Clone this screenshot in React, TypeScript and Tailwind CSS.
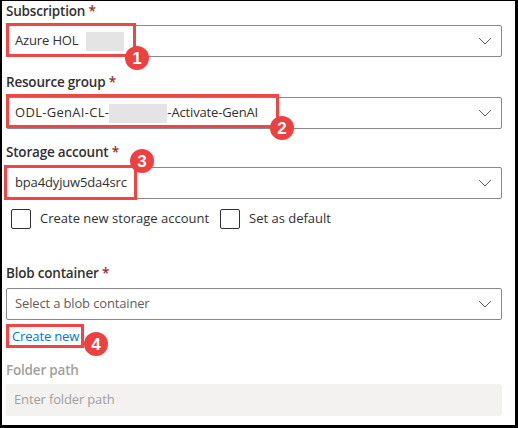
import React from "react";

const font = { fontFamily: '"Open Sans", sans-serif' };

function Chevron() {
  return (
    <svg width="14" height="8" viewBox="0 0 14 8" className="shrink-0">
      <polyline points="1,1 7,7 13,1" fill="none" stroke="#605e5c" strokeWidth="1" />
    </svg>
  );
}

function Label({ text, muted }: { text: string; muted?: boolean }) {
  return (
    <div className={`h-5 leading-5 text-[13.5px] tracking-[-0.2px] font-semibold ${muted ? "text-[#a19f9d]" : "text-[#323130]"}`}>
      {text}
      {!muted && <span className="text-[#a4262c]"> *</span>}
    </div>
  );
}

function Dropdown({ children, className = "" }: { children: React.ReactNode; className?: string }) {
  return (
    <div className={`h-8 border border-[#8a8886] rounded-[2px] flex items-center pl-2 pr-[9px] ${className}`}>
      <div className="flex-1 flex items-center text-[13px] tracking-[-0.15px] text-[#323130] whitespace-nowrap">{children}</div>
      <Chevron />
    </div>
  );
}

function Blur({ w }: { w: number }) {
  return <span className="inline-block h-[19px] bg-[#e4e4e4]" style={{ width: w }} />;
}

function Checkbox({ label }: { label: string }) {
  return (
    <div className="flex items-center gap-[9px] whitespace-nowrap">
      <div className="w-5 h-5 border border-[#323130] rounded-[2px] shrink-0" />
      <span className="text-[13px] tracking-[0px] text-[#323130]">{label}</span>
    </div>
  );
}

function Badge({ n, left, top }: { n: number; left: number; top: number }) {
  return (
    <div
      className="absolute w-6 h-6 rounded-full bg-[#ec4141] text-white flex items-center justify-center text-[17px] font-bold leading-none"
      style={{ left, top, fontFamily: '"Liberation Sans", Arial, sans-serif' }}
    >
      {n}
    </div>
  );
}

function RedBox({ left, top, w, h }: { left: number; top: number; w: number; h: number }) {
  return (
    <div className="absolute border-[3px] border-[#ee4545]" style={{ left, top, width: w, height: h }} />
  );
}

export default function App() {
  return (
    <div
      className="relative w-[518px] h-[428px] bg-white border-black border-l-2 border-t border-r-[3px] border-b-[3px] overflow-hidden"
      style={font}
    >
      <div className="pl-1 pr-[13px] flex flex-col">
        <Label text="Subscription" />
        <Dropdown className="mt-1">
          <span>Azure HOL</span>
          <span className="ml-[8px] flex"><Blur w={38} /></span>
        </Dropdown>

        <div className="mt-[15px]"><Label text="Resource group" /></div>
        <Dropdown className="mt-[5px]">
          <span className="tracking-[0.3px]">ODL-GenAI-CL-</span>
          <Blur w={58} />
          <span>-Activate-GenAI</span>
        </Dropdown>

        <div className="mt-[13px]"><Label text="Storage account" /></div>
        <Dropdown className="mt-[5px]">
          <span>bpa4dyjuw5da4src</span>
        </Dropdown>

        <div className="mt-[10px] h-5 flex items-center pl-[5px]">
          <div className="w-[209px]"><Checkbox label="Create new storage account" /></div>
          <Checkbox label="Set as default" />
        </div>

        <div className="mt-[34px]"><Label text="Blob container" /></div>
        <Dropdown className="mt-[5px]">
          <span className="text-[#605e5c]">Select a blob container</span>
        </Dropdown>

        <div className="mt-[6px] h-5 leading-5 pl-[6px] text-[13px] tracking-[-0.15px] text-[#0078d4]">Create new</div>

        <div className="mt-[14px]"><Label text="Folder path" muted /></div>
        <div className="mt-1 h-8 rounded-[2px] bg-[#f3f2f1] flex items-center pl-2 text-[13px] tracking-[-0.15px] text-[#a19f9d]">
          Enter folder path
        </div>
      </div>

      <RedBox left={4} top={22} w={130} h={34} />
      <RedBox left={4} top={93} w={273} h={34} />
      <RedBox left={2} top={164} w={133} h={35} />
      <RedBox left={4} top={323} w={78} h={24} />

      <Badge n={1} left={123} top={45} />
      <Badge n={2} left={268} top={115} />
      <Badge n={3} left={128} top={148} />
      <Badge n={4} left={82} top={331} />
    </div>
  );
}
